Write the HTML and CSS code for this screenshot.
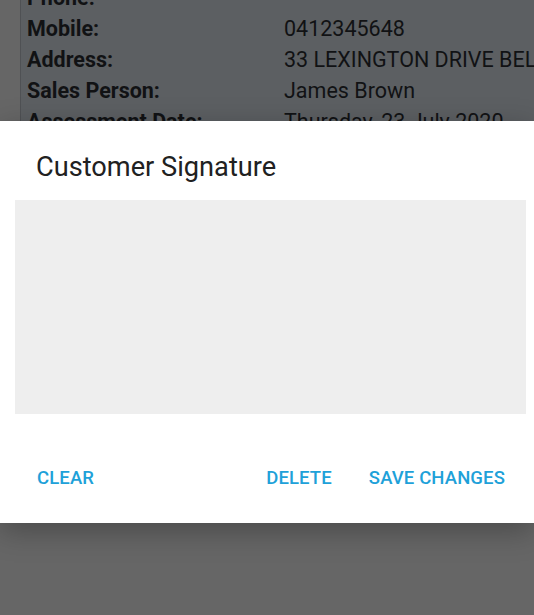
FILE: index.html
```html
<!DOCTYPE html>
<html>
<head>
<meta charset="utf-8">
<link rel="stylesheet" href="styles.css">
</head>
<body>
<div class="screen">
  <div class="card">
    <div class="row"><span class="label">Phone:</span><span class="value"></span></div>
    <div class="row"><span class="label">Mobile:</span><span class="value">0412345648</span></div>
    <div class="row"><span class="label">Address:</span><span class="value">33 LEXINGTON DRIVE BELLA VISTA NSW 2153</span></div>
    <div class="row"><span class="label">Sales Person:</span><span class="value">James Brown</span></div>
    <div class="row"><span class="label">Assessment Date:</span><span class="value">Thursday, 23 July 2020</span></div>
    <div class="row"><span class="label">Assessment Time:</span><span class="value">10:00 AM</span></div>
  </div>
  <div class="dialog">
    <div class="title">Customer Signature</div>
    <div class="pad"></div>
    <div class="actions">
      <button class="btn">CLEAR</button>
      <button class="btn push">DELETE</button>
      <button class="btn">SAVE CHANGES</button>
    </div>
  </div>
</div>
</body>
</html>
```
FILE: styles.css
```css
html, body {
  margin: 0;
  padding: 0;
}
body {
  width: 534px;
  height: 615px;
  overflow: hidden;
  background: #666666;
  font-family: Roboto, "Noto Sans", "Liberation Sans", sans-serif;
}
.screen {
  position: relative;
  width: 534px;
  height: 615px;
  overflow: hidden;
  padding-left: 20px;
  box-sizing: border-box;
}
.card {
  background: #5c5f62;
  border-left: 1px solid #4f5154;
  margin-top: -18px;
  padding-left: 6px;
  height: 300px;
  overflow: hidden;
}
.row {
  display: flex;
  height: 31px;
  align-items: center;
  font-size: 21.5px;
  color: #111214;
  white-space: nowrap;
}
.label {
  width: 257px;
  flex: none;
  font-weight: 700;
}
.value {
  font-weight: 400;
}
.dialog {
  position: absolute;
  left: 0;
  top: 121px;
  width: 534px;
  height: 402px;
  background: #ffffff;
  box-shadow: 0 8px 28px rgba(0, 0, 0, 0.28);
  display: flex;
  flex-direction: column;
}
.title {
  padding: 30px 36px 0;
  height: 32px;
  line-height: 32px;
  font-size: 27.2px;
  color: #212121;
}
.pad {
  margin: 17px 8px 0 15px;
  height: 214px;
  background: #eeeeee;
}
.actions {
  display: flex;
  align-items: center;
  height: 48px;
  margin-top: 40px;
  padding: 0 13px 0 21px;
  gap: 5px;
}
.btn {
  border: none;
  background: transparent;
  font-family: Roboto, "Noto Sans", "Liberation Sans", sans-serif;
  font-size: 18.5px;
  font-weight: 500;
  letter-spacing: 0.12px;
  color: #1ea1d9;
  padding: 0 16px;
  height: 48px;
}
.push {
  margin-left: auto;
}
```
